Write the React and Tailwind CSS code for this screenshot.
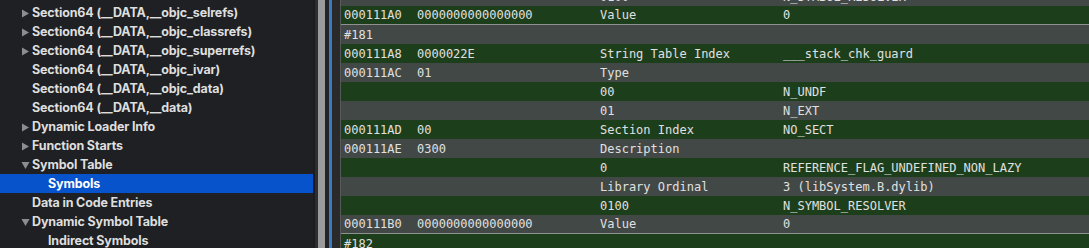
import React from 'react';

const sidebarItems = [
    { label: 'Section64 (__DATA,__objc_selrefs)', arrow: 'right', level: 0 },
    { label: 'Section64 (__DATA,__objc_classrefs)', arrow: 'right', level: 0 },
    { label: 'Section64 (__DATA,__objc_superrefs)', arrow: 'right', level: 0 },
    { label: 'Section64 (__DATA,__objc_ivar)', level: 0 },
    { label: 'Section64 (__DATA,__objc_data)', level: 0 },
    { label: 'Section64 (__DATA,__data)', level: 0 },
    { label: 'Dynamic Loader Info', arrow: 'right', level: 0 },
    { label: 'Function Starts', arrow: 'right', level: 0 },
    { label: 'Symbol Table', arrow: 'down', level: 0 },
    { label: 'Symbols', level: 1, selected: true },
    { label: 'Data in Code Entries', level: 0 },
    { label: 'Dynamic Symbol Table', arrow: 'down', level: 0 },
    { label: 'Indirect Symbols', level: 1 },
];

// offset, data, description, value
const rows = [
    ['', '', '0100', 'N_SYMBOL_RESOLVER'],
    ['000111A0', '0000000000000000', 'Value', '0', true],
    ['#181', '', '', ''],
    ['000111A8', '0000022E', 'String Table Index', '___stack_chk_guard'],
    ['000111AC', '01', 'Type', ''],
    ['', '', '00', 'N_UNDF'],
    ['', '', '01', 'N_EXT'],
    ['000111AD', '00', 'Section Index', 'NO_SECT'],
    ['000111AE', '0300', 'Description', ''],
    ['', '', '0', 'REFERENCE_FLAG_UNDEFINED_NON_LAZY'],
    ['', '', 'Library Ordinal', '3 (libSystem.B.dylib)'],
    ['', '', '0100', 'N_SYMBOL_RESOLVER'],
    ['000111B0', '0000000000000000', 'Value', '0', true],
    ['#182', '', '', ''],
];

const Disclosure = ({ dir }) => (
    <svg width="9" height="9" viewBox="0 0 9 9" className="mt-[2px] shrink-0">
        {dir === 'right'
            ? <path d="M1 0.5 L8 4.5 L1 8.5 Z" fill="#8d8d8f" />
            : <path d="M0.5 1 L8.5 1 L4.5 8 Z" fill="#8d8d8f" />}
    </svg>
);

const App = () => {
    return (
        <div className="flex h-[248px] w-[1089px] overflow-hidden bg-[#1e2023]">
            {/* Sidebar */}
            <div className="w-[313px] shrink-0 pt-[3px] font-['Inter',sans-serif] text-[12.5px] font-bold tracking-[-0.15px]">
                {sidebarItems.map((item, i) => (
                    <div
                        key={i}
                        className={`flex h-[19px] items-center ${item.selected ? 'bg-[#0753cc] text-white' : 'text-[#dedede]'}`}
                    >
                        <div className="flex w-[32px] shrink-0 justify-end pr-[2px]">
                            {item.arrow && <Disclosure dir={item.arrow} />}
                        </div>
                        <span className={`mt-[2px] ${item.level === 1 ? 'pl-[16px]' : ''}`}>{item.label}</span>
                    </div>
                ))}
            </div>

            {/* Divider + scroller */}
            <div className="flex shrink-0">
                <div className="w-[2px] bg-[#1b1c1e]" />
                <div className="w-[3px] bg-[#2d2d2f]" />
                <div className="w-[7px] bg-[#9b9b9b]" />
                <div className="w-[4px] bg-[#242426]" />
                <div className="w-[3px] bg-[#3a7cc2]" />
                <div className="w-[8px] bg-[#2a2a2b]" />
                <div className="w-[1px] bg-[#58595a]" />
            </div>

            {/* Data table */}
            <div className="flex-1 overflow-hidden font-['DejaVu_Sans_Mono',monospace] text-[12px] text-[#e0e0e0]">
                <div className="mt-[-13px]">
                    {rows.map((r, i) => (
                        <div
                            key={i}
                            className={`flex h-[19px] items-center pl-[3px] ${i % 2 === 0 ? 'bg-[#424846]' : 'bg-[#1d3e1b]'} ${r[4] ? 'border-b border-[#8e918f]' : ''}`}
                        >
                            <span className="w-[73px] shrink-0 whitespace-pre">{r[0]}</span>
                            <span className="w-[183px] shrink-0 whitespace-pre">{r[1]}</span>
                            <span className="w-[183px] shrink-0 whitespace-pre">{r[2]}</span>
                            <span className="whitespace-pre">{r[3]}</span>
                        </div>
                    ))}
                </div>
            </div>
        </div>
    );
};

export default App;
